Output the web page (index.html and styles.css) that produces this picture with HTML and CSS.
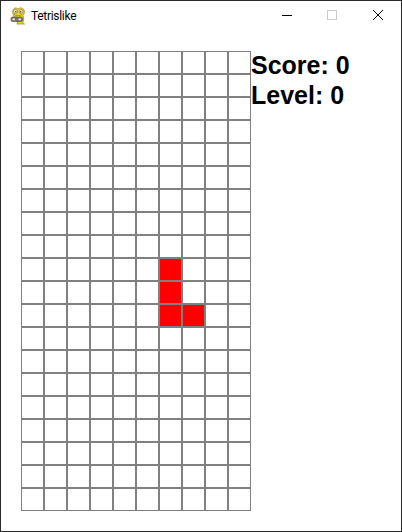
FILE: index.html
```html
<!DOCTYPE html>
<html lang="en">
<head>
    <meta charset="UTF-8">
    <title>Tetrislike</title>
    <link rel="stylesheet" href="styles.css">
</head>
<body>
    <div class="window">
        <div class="titlebar">
            <svg class="app-icon" width="16" height="18" viewBox="0 0 16 18">
                <path d="M4 9C2.500 7 2 3 4 1.500C5.500 .5 7 1 8 2C9.500 .5 12 .5 13.500 2C15 4 14.500 7 13 8.500C14 11 14 14 12.500 15.500L14.500 17H7L8 14.500L3 13L4 10Z" fill="#f5d320" stroke="#8f7d1c" stroke-width=".7"/>
                <circle cx="5.500" cy="4.500" r="2" fill="#fff" stroke="#6b6330" stroke-width=".6"/>
                <circle cx="11" cy="4.500" r="2" fill="#fff" stroke="#6b6330" stroke-width=".6"/>
                <circle cx="5.800" cy="4.800" r=".8" fill="#222"/>
                <circle cx="10.800" cy="4.800" r=".8" fill="#222"/>
                <path d="M4 7.500C6 9 10 9 12 7.500" stroke="#8f7d1c" stroke-width=".7" fill="none"/>
                <rect x="1" y="10" width="11.500" height="4.500" rx="1.500" fill="#77746c" stroke="#4a4a46" stroke-width=".6"/>
                <rect x="2.500" y="11.500" width="2.500" height="1.700" fill="#e8e8e8"/>
                <rect x="8.500" y="11.500" width="2.500" height="1.700" fill="#e8e8e8"/>
            </svg>
            <span class="app-title">Tetrislike</span>
            <div class="controls">
                <div class="control minimize">
                    <svg width="10" height="10" viewBox="0 0 10 10"><path d="M0 5.500H10" stroke="#000" fill="none"/></svg>
                </div>
                <div class="control">
                    <svg width="10" height="10" viewBox="0 0 10 10"><rect x=".5" y=".5" width="9" height="9" stroke="#ccc" fill="none"/></svg>
                </div>
                <div class="control">
                    <svg width="10" height="10" viewBox="0 0 10 10"><path d="M0 0L10 10M10 0L0 10" stroke="#000" fill="none"/></svg>
                </div>
            </div>
        </div>
        <div class="game">
            <div class="board" id="board">
                <div class="cell"></div><div class="cell"></div><div class="cell"></div><div class="cell"></div><div class="cell"></div><div class="cell"></div><div class="cell"></div><div class="cell"></div><div class="cell"></div><div class="cell"></div>
                <div class="cell"></div><div class="cell"></div><div class="cell"></div><div class="cell"></div><div class="cell"></div><div class="cell"></div><div class="cell"></div><div class="cell"></div><div class="cell"></div><div class="cell"></div>
                <div class="cell"></div><div class="cell"></div><div class="cell"></div><div class="cell"></div><div class="cell"></div><div class="cell"></div><div class="cell"></div><div class="cell"></div><div class="cell"></div><div class="cell"></div>
                <div class="cell"></div><div class="cell"></div><div class="cell"></div><div class="cell"></div><div class="cell"></div><div class="cell"></div><div class="cell"></div><div class="cell"></div><div class="cell"></div><div class="cell"></div>
                <div class="cell"></div><div class="cell"></div><div class="cell"></div><div class="cell"></div><div class="cell"></div><div class="cell"></div><div class="cell"></div><div class="cell"></div><div class="cell"></div><div class="cell"></div>
                <div class="cell"></div><div class="cell"></div><div class="cell"></div><div class="cell"></div><div class="cell"></div><div class="cell"></div><div class="cell"></div><div class="cell"></div><div class="cell"></div><div class="cell"></div>
                <div class="cell"></div><div class="cell"></div><div class="cell"></div><div class="cell"></div><div class="cell"></div><div class="cell"></div><div class="cell"></div><div class="cell"></div><div class="cell"></div><div class="cell"></div>
                <div class="cell"></div><div class="cell"></div><div class="cell"></div><div class="cell"></div><div class="cell"></div><div class="cell"></div><div class="cell"></div><div class="cell"></div><div class="cell"></div><div class="cell"></div>
                <div class="cell"></div><div class="cell"></div><div class="cell"></div><div class="cell"></div><div class="cell"></div><div class="cell"></div><div class="cell"></div><div class="cell"></div><div class="cell"></div><div class="cell"></div>
                <div class="cell"></div><div class="cell"></div><div class="cell"></div><div class="cell"></div><div class="cell"></div><div class="cell"></div><div class="cell red"></div><div class="cell"></div><div class="cell"></div><div class="cell"></div>
                <div class="cell"></div><div class="cell"></div><div class="cell"></div><div class="cell"></div><div class="cell"></div><div class="cell"></div><div class="cell red"></div><div class="cell"></div><div class="cell"></div><div class="cell"></div>
                <div class="cell"></div><div class="cell"></div><div class="cell"></div><div class="cell"></div><div class="cell"></div><div class="cell"></div><div class="cell red"></div><div class="cell red"></div><div class="cell"></div><div class="cell"></div>
                <div class="cell"></div><div class="cell"></div><div class="cell"></div><div class="cell"></div><div class="cell"></div><div class="cell"></div><div class="cell"></div><div class="cell"></div><div class="cell"></div><div class="cell"></div>
                <div class="cell"></div><div class="cell"></div><div class="cell"></div><div class="cell"></div><div class="cell"></div><div class="cell"></div><div class="cell"></div><div class="cell"></div><div class="cell"></div><div class="cell"></div>
                <div class="cell"></div><div class="cell"></div><div class="cell"></div><div class="cell"></div><div class="cell"></div><div class="cell"></div><div class="cell"></div><div class="cell"></div><div class="cell"></div><div class="cell"></div>
                <div class="cell"></div><div class="cell"></div><div class="cell"></div><div class="cell"></div><div class="cell"></div><div class="cell"></div><div class="cell"></div><div class="cell"></div><div class="cell"></div><div class="cell"></div>
                <div class="cell"></div><div class="cell"></div><div class="cell"></div><div class="cell"></div><div class="cell"></div><div class="cell"></div><div class="cell"></div><div class="cell"></div><div class="cell"></div><div class="cell"></div>
                <div class="cell"></div><div class="cell"></div><div class="cell"></div><div class="cell"></div><div class="cell"></div><div class="cell"></div><div class="cell"></div><div class="cell"></div><div class="cell"></div><div class="cell"></div>
                <div class="cell"></div><div class="cell"></div><div class="cell"></div><div class="cell"></div><div class="cell"></div><div class="cell"></div><div class="cell"></div><div class="cell"></div><div class="cell"></div><div class="cell"></div>
                <div class="cell"></div><div class="cell"></div><div class="cell"></div><div class="cell"></div><div class="cell"></div><div class="cell"></div><div class="cell"></div><div class="cell"></div><div class="cell"></div><div class="cell"></div>
            </div>
            <div class="stats">
                <div class="stat">Score: 0</div>
                <div class="stat">Level: 0</div>
            </div>
        </div>
    </div>
</body>
</html>
```

FILE: styles.css
```css
html, body {
    margin: 0;
    padding: 0;
    background-color: #fff;
}
.window {
    box-sizing: border-box;
    width: 402px;
    height: 532px;
    border: 1px solid #2a2a2a;
    background-color: #fff;
    display: flex;
    flex-direction: column;
}
.titlebar {
    height: 30px;
    padding-left: 9px;
    display: flex;
    align-items: center;
}
.app-icon {
    margin-right: 5px;
}
.app-title {
    font-family: Roboto, sans-serif;
    font-size: 12px;
    letter-spacing: -0.3px;
    color: #000;
}
.controls {
    display: flex;
    align-self: flex-start;
    margin-left: auto;
}
.control {
    width: 46px;
    height: 28px;
    display: flex;
    align-items: center;
    justify-content: center;
}
.minimize {
    padding-left: 2px;
    box-sizing: border-box;
}
.game {
    display: flex;
    align-items: flex-start;
    padding: 20px 0 0 20px;
}
.board {
    display: grid;
    grid-template-columns: repeat(10, 23px);
    grid-auto-rows: 23px;
}
.cell {
    box-sizing: border-box;
    border: 1px solid #808080;
}
.red {
    background-color: #f00;
}
.stats {
    margin-top: -1px;
}
.stat {
    font-family: "Liberation Sans", Arial, sans-serif;
    font-weight: bold;
    font-size: 25px;
    line-height: 30px;
    color: #000;
}
```
